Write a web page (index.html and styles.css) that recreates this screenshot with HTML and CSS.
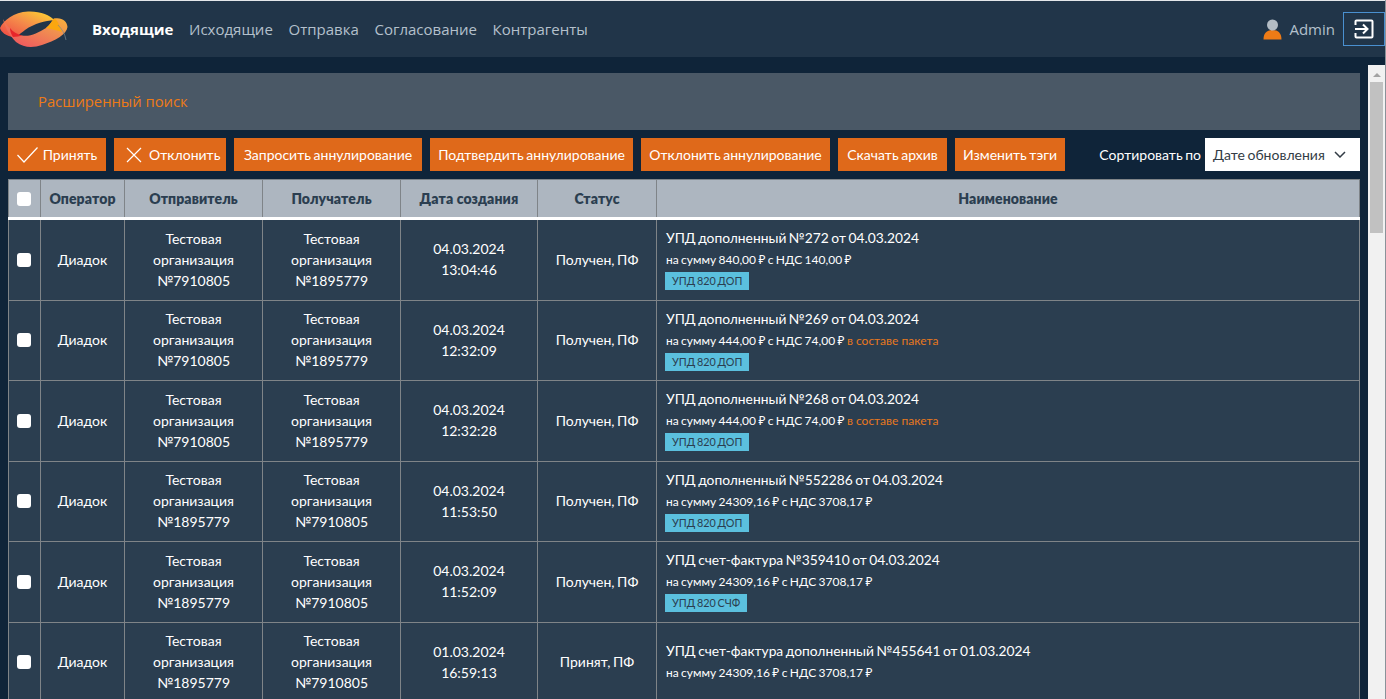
FILE: index.html
```html
<!DOCTYPE html>
<html lang="ru">
<head>
  <meta charset="UTF-8">
  <title>Входящие</title>
  <link rel="stylesheet" href="styles.css">
</head>
<body>
<header class="top">
  <svg class="logo" width="70" height="56" viewBox="0 0 70 56">
    <defs>
      <linearGradient id="lg1" x1="0" y1="1" x2="1" y2="0">
        <stop offset="0" stop-color="#ee4545"/>
        <stop offset="0.5" stop-color="#f58b4a"/>
        <stop offset="1" stop-color="#ffd92e"/>
      </linearGradient>
      <linearGradient id="lg2" x1="0" y1="1" x2="1" y2="0">
        <stop offset="0" stop-color="#ee4a62"/>
        <stop offset="0.6" stop-color="#f08a52"/>
        <stop offset="1" stop-color="#f9b23a"/>
      </linearGradient>
    </defs>
    <path d="M0 27 C3 20 14 11 28 10.5 C40 10 50 14 54 19 C45 20 35 22 25 29 C20 33 16 36 13 36 C6 35 1 31 0 27Z" fill="url(#lg1)"/>
    <path d="M3 18 C8 27 14 33 22 34.5 C30 36 38 32 46 27 C50 24 52 20 54 17.5 C62 16 67 20 67.5 26 C67 33 55 40 42 44 C33 47 24 47 16 41 C9 34 5 26 3 18Z" fill="url(#lg2)"/>
    <path d="M10 27 C13 31 17 33 22 34.5 C20 35 16 36 13 36 C11 33 10 30 10 27Z" fill="#e8252a"/>
    <path d="M46 27 C50 24 52 20 54 17.5 C58 19 60 26 62 31 C57 29 51 28 46 27Z" fill="#fba70f"/>
    <path d="M58 24 C62 28 65 33 66 39" fill="none" stroke="#7b8a90" stroke-width="0.7"/>
  </svg>
  <nav class="menu">
    <a class="active">Входящие</a>
    <a>Исходящие</a>
    <a>Отправка</a>
    <a>Согласование</a>
    <a>Контрагенты</a>
  </nav>
  <div class="user">
    <svg width="19" height="21" viewBox="0 0 19 21">
      <path d="M0.5 20.5 C0.5 14 4 11 9.5 11 C15 11 18.5 14 18.5 20.5Z" fill="#ee7b16"/>
      <circle cx="9.5" cy="6" r="5.5" fill="#b3bcc4"/>
    </svg>
    <span>Admin</span>
  </div>
  <a class="logout">
    <svg width="20" height="20" viewBox="0 0 20 20" fill="none" stroke="#fff" stroke-width="2">
      <path d="M1.5 6V2.5a1 1 0 0 1 1-1h15a1 1 0 0 1 1 1v15a1 1 0 0 1-1 1h-15a1 1 0 0 1-1-1V14"/>
      <path d="M1 10h12M9 5.5l4.5 4.5L9 14.5"/>
    </svg>
  </a>
</header>

<div class="page">
  <main class="content">
    <div class="search">Расширенный поиск</div>

    <div class="toolbar">
      <a class="btn btn-accept">
        <svg width="21" height="16" viewBox="0 0 21 16" fill="none" stroke="#fff" stroke-width="1.2"><path d="M0.5 8l6.5 7L20.5 0.5"/></svg>
        Принять
      </a>
      <a class="btn btn-reject">
        <svg width="16" height="16" viewBox="0 0 16 16" fill="none" stroke="#fff" stroke-width="1.2"><path d="M1 1l14 14M15 1L1 15"/></svg>
        Отклонить
      </a>
      <a class="btn w188">Запросить аннулирование</a>
      <a class="btn w203">Подтвердить аннулирование</a>
      <a class="btn w189">Отклонить аннулирование</a>
      <a class="btn w109">Скачать архив</a>
      <a class="btn w110">Изменить тэги</a>
      <div class="sort">
        <span>Сортировать по</span>
        <div class="select">
          Дате обновления
          <svg width="12" height="7" viewBox="0 0 12 7" fill="none" stroke="#333c45" stroke-width="1.5"><path d="M1 1l5 5 5-5"/></svg>
        </div>
      </div>
    </div>

    <table class="docs">
      <colgroup>
        <col class="c-check"><col class="c-op"><col class="c-from"><col class="c-to">
        <col class="c-date"><col class="c-status"><col>
      </colgroup>
      <thead>
        <tr>
          <th><span class="check"></span></th>
          <th>Оператор</th>
          <th>Отправитель</th>
          <th>Получатель</th>
          <th>Дата создания</th>
          <th>Статус</th>
          <th>Наименование</th>
        </tr>
      </thead>
      <tbody>
        <tr>
          <td><span class="check"></span></td>
          <td>Диадок</td>
          <td>Тестовая организация №7910805</td>
          <td>Тестовая организация №1895779</td>
          <td>04.03.2024<br>13:04:46</td>
          <td>Получен, ПФ</td>
          <td class="name">
            <div class="title">УПД дополненный №272 от 04.03.2024</div>
            <div class="sum">на сумму 840,00 ₽ с НДС 140,00 ₽</div>
            <span class="tag">УПД 820 ДОП</span>
          </td>
        </tr>
        <tr>
          <td><span class="check"></span></td>
          <td>Диадок</td>
          <td>Тестовая организация №7910805</td>
          <td>Тестовая организация №1895779</td>
          <td>04.03.2024<br>12:32:09</td>
          <td>Получен, ПФ</td>
          <td class="name">
            <div class="title">УПД дополненный №269 от 04.03.2024</div>
            <div class="sum">на сумму 444,00 ₽ с НДС 74,00 ₽ <span class="pack">в составе пакета</span></div>
            <span class="tag">УПД 820 ДОП</span>
          </td>
        </tr>
        <tr>
          <td><span class="check"></span></td>
          <td>Диадок</td>
          <td>Тестовая организация №7910805</td>
          <td>Тестовая организация №1895779</td>
          <td>04.03.2024<br>12:32:28</td>
          <td>Получен, ПФ</td>
          <td class="name">
            <div class="title">УПД дополненный №268 от 04.03.2024</div>
            <div class="sum">на сумму 444,00 ₽ с НДС 74,00 ₽ <span class="pack">в составе пакета</span></div>
            <span class="tag">УПД 820 ДОП</span>
          </td>
        </tr>
        <tr>
          <td><span class="check"></span></td>
          <td>Диадок</td>
          <td>Тестовая организация №1895779</td>
          <td>Тестовая организация №7910805</td>
          <td>04.03.2024<br>11:53:50</td>
          <td>Получен, ПФ</td>
          <td class="name">
            <div class="title">УПД дополненный №552286 от 04.03.2024</div>
            <div class="sum">на сумму 24309,16 ₽ с НДС 3708,17 ₽</div>
            <span class="tag">УПД 820 ДОП</span>
          </td>
        </tr>
        <tr>
          <td><span class="check"></span></td>
          <td>Диадок</td>
          <td>Тестовая организация №1895779</td>
          <td>Тестовая организация №7910805</td>
          <td>04.03.2024<br>11:52:09</td>
          <td>Получен, ПФ</td>
          <td class="name">
            <div class="title">УПД счет-фактура №359410 от 04.03.2024</div>
            <div class="sum">на сумму 24309,16 ₽ с НДС 3708,17 ₽</div>
            <span class="tag">УПД 820 СЧФ</span>
          </td>
        </tr>
        <tr>
          <td><span class="check"></span></td>
          <td>Диадок</td>
          <td>Тестовая организация №1895779</td>
          <td>Тестовая организация №7910805</td>
          <td>01.03.2024<br>16:59:13</td>
          <td>Принят, ПФ</td>
          <td class="name">
            <div class="title">УПД счет-фактура дополненный №455641 от 01.03.2024</div>
            <div class="sum">на сумму 24309,16 ₽ с НДС 3708,17 ₽</div>
          </td>
        </tr>
      </tbody>
    </table>
  </main>
  <aside class="scrollbar">
    <span class="arrow"></span>
    <span class="thumb"></span>
  </aside>
</div>
</body>
</html>
```

FILE: styles.css
```css
html, body {
  height: 100%;
}

body {
  margin: 0;
  overflow: hidden;
  display: flex;
  flex-direction: column;
  box-sizing: border-box;
  border-right: 1px solid #8a9299;
  background: #0f2439;
  color: #fff;
  font-family: "Lato", "Noto Sans", sans-serif;
  font-size: 14px;
}

.top {
  flex: none;
  display: flex;
  align-items: center;
  height: 56px;
  border-top: 1px solid #e4e7ea;
  background: #213549;
}

.logo {
  flex: none;
  margin-top: -1px;
}

.menu {
  display: flex;
  gap: 15.7px;
  margin-left: 22px;
  font-family: "Open Sans", "Noto Sans", sans-serif;
  font-size: 15px;
  color: #b4c0cc;
}

.menu .active {
  color: #fff;
  font-weight: 700;
}

.user {
  display: flex;
  align-items: center;
  gap: 7px;
  margin-left: auto;
  margin-right: 8px;
  font-family: "Open Sans", "Noto Sans", sans-serif;
  font-size: 15px;
  color: #b4c0cc;
}

.logout {
  display: flex;
  align-items: center;
  justify-content: center;
  width: 42px;
  height: 34px;
  border: 1px solid #4a90d0;
  box-sizing: border-box;
}

.page {
  flex: 1;
  display: flex;
  min-height: 0;
  margin-top: 8px;
}

.content {
  flex: 1;
  min-width: 0;
  overflow: hidden;
  padding: 8px 8px 0;
}

.search {
  height: 57px;
  line-height: 57px;
  padding-left: 30px;
  background: #4a5866;
  color: #ee7b16;
  font-family: "Open Sans", "Noto Sans", sans-serif;
  font-size: 14.8px;
}

.toolbar {
  display: flex;
  gap: 8px;
  margin-top: 8px;
}

.btn {
  display: flex;
  align-items: center;
  justify-content: center;
  gap: 5px;
  height: 33px;
  background: #df691a;
  font-size: 14px;
  word-spacing: -1px;
}

.btn-accept { width: 98px; }
.btn-reject { width: 112px; gap: 7px; justify-content: flex-start; padding-left: 12px; box-sizing: border-box; }
.w188 { width: 188px; }
.w203 { width: 203px; }
.w189 { width: 189px; }
.w109 { width: 109px; }
.w110 { width: 110px; }

.sort {
  display: flex;
  align-items: center;
  gap: 4px;
  margin-left: auto;
  font-size: 14px;
  word-spacing: -1px;
}

.select {
  display: flex;
  align-items: center;
  justify-content: space-between;
  width: 155px;
  height: 33px;
  padding: 0 14px 0 8px;
  box-sizing: border-box;
  background: #fff;
  color: #333c45;
}

.docs {
  width: 100%;
  margin-top: 8px;
  border-collapse: collapse;
  table-layout: fixed;
}

.c-check { width: 32px; }
.c-op { width: 84px; }
.c-from { width: 138px; }
.c-to { width: 138px; }
.c-date { width: 137px; }
.c-status { width: 119px; }

.docs th, .docs td {
  border: 1px solid #7f8488;
  text-align: center;
  font-size: 14px;
}

.docs th {
  height: 37px;
  padding: 0;
  background: #adb6c0;
  color: #2b3e50;
  font-weight: 800;
  letter-spacing: 0.1px;
  border-bottom: 3px solid #fff;
}

.docs td {
  height: 78.5px;
  padding: 0 8px 1px;
  background: #2b3e50;
  line-height: 21px;
  word-spacing: -1px;
}

.docs th:first-child, .docs td:first-child {
  padding: 0;
}

.docs td.name {
  padding-left: 9px;
  text-align: left;
}

.title {
  font-size: 13.8px;
  line-height: 20px;
}

.sum {
  margin-top: 3px;
  font-size: 12px;
  line-height: 18px;
  word-spacing: -0.7px;
}

.pack {
  color: #e8781e;
  word-spacing: 0;
}

.tag {
  display: inline-block;
  margin-top: 3px;
  margin-left: -1px;
  padding: 0 7px;
  background: #5bc0de;
  color: #2b3e50;
  font-size: 10.8px;
  line-height: 18px;
  vertical-align: top;
}

.check {
  display: block;
  width: 14px;
  height: 14px;
  margin-left: 8px;
  border-radius: 3px;
  background: #fff;
}

.scrollbar {
  flex: none;
  display: flex;
  flex-direction: column;
  align-items: center;
  width: 17px;
  background: #f1f1f1;
}

.arrow {
  width: 0;
  height: 0;
  margin: 8px 0 5px;
  border-left: 4px solid transparent;
  border-right: 4px solid transparent;
  border-bottom: 4px solid #a3a3a3;
}

.thumb {
  width: 13px;
  height: 151px;
  background: #c1c1c1;
}
```
